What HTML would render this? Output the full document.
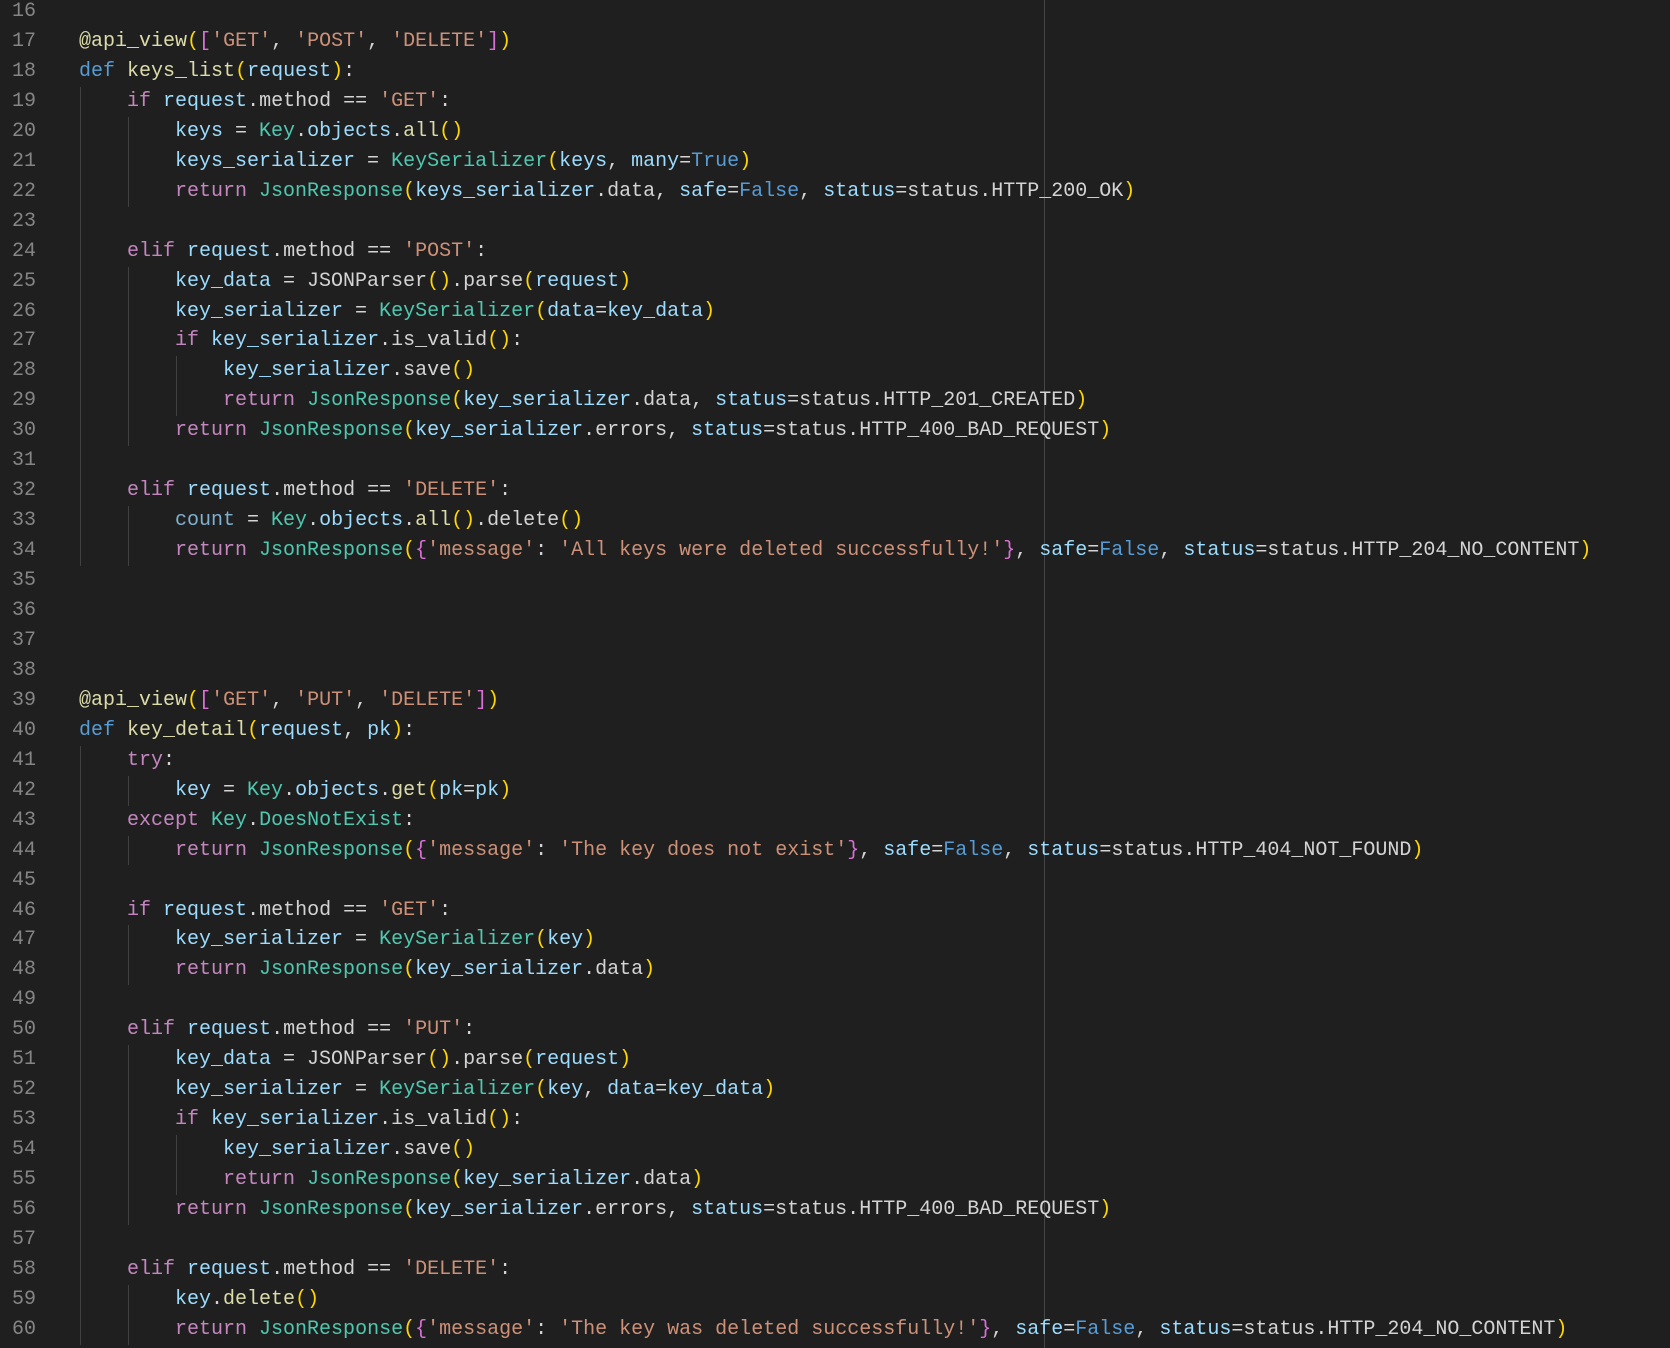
<!DOCTYPE html>
<html><head><meta charset="utf-8"><style>
html,body{margin:0;padding:0;background:#1f1f1f;width:1670px;height:1348px;overflow:hidden}
.wrap{position:relative;width:1670px;height:1348px;font-family:"Liberation Mono",monospace;font-size:20px}
.ln{position:absolute;left:0;width:36px;text-align:right;color:#858585;height:29.95px;line-height:29.95px}
.cd{position:absolute;left:79px;white-space:pre;color:#d4d4d4;height:29.95px;line-height:29.95px}
.g{position:absolute;width:1px;background:#404040}
.ruler{position:absolute;left:1044px;top:0;width:1px;height:1348px;background:#464646}
.k{color:#569cd6}.c{color:#c586c0}.f{color:#dcdcaa}.v{color:#9cdcfe}.t{color:#4ec9b0}.s{color:#ce9178}.y{color:#ffd700}.p{color:#da70d6}.w{color:#d4d4d4}.u{color:#7fb0cf}
</style></head><body><div class="wrap" id="w">
<div class="ruler"></div>
</div>
<script>
(function(){
var L={
16:'',
17:'<span class="f">@api_view</span><span class="y">(</span><span class="p">[</span><span class="s">\'GET\'</span>, <span class="s">\'POST\'</span>, <span class="s">\'DELETE\'</span><span class="p">]</span><span class="y">)</span>',
18:'<span class="k">def</span> <span class="f">keys_list</span><span class="y">(</span><span class="v">request</span><span class="y">)</span>:',
19:'    <span class="c">if</span> <span class="v">request</span>.method == <span class="s">\'GET\'</span>:',
20:'        <span class="v">keys</span> = <span class="t">Key</span>.<span class="v">objects</span>.<span class="f">all</span><span class="y">()</span>',
21:'        <span class="v">keys_serializer</span> = <span class="t">KeySerializer</span><span class="y">(</span><span class="v">keys</span>, <span class="v">many</span>=<span class="k">True</span><span class="y">)</span>',
22:'        <span class="c">return</span> <span class="t">JsonResponse</span><span class="y">(</span><span class="v">keys_serializer</span>.data, <span class="v">safe</span>=<span class="k">False</span>, <span class="v">status</span>=status.HTTP_200_OK<span class="y">)</span>',
23:'',
24:'    <span class="c">elif</span> <span class="v">request</span>.method == <span class="s">\'POST\'</span>:',
25:'        <span class="v">key_data</span> = JSONParser<span class="y">()</span>.parse<span class="y">(</span><span class="v">request</span><span class="y">)</span>',
26:'        <span class="v">key_serializer</span> = <span class="t">KeySerializer</span><span class="y">(</span><span class="v">data</span>=<span class="v">key_data</span><span class="y">)</span>',
27:'        <span class="c">if</span> <span class="v">key_serializer</span>.is_valid<span class="y">()</span>:',
28:'            <span class="v">key_serializer</span>.save<span class="y">()</span>',
29:'            <span class="c">return</span> <span class="t">JsonResponse</span><span class="y">(</span><span class="v">key_serializer</span>.data, <span class="v">status</span>=status.HTTP_201_CREATED<span class="y">)</span>',
30:'        <span class="c">return</span> <span class="t">JsonResponse</span><span class="y">(</span><span class="v">key_serializer</span>.errors, <span class="v">status</span>=status.HTTP_400_BAD_REQUEST<span class="y">)</span>',
31:'',
32:'    <span class="c">elif</span> <span class="v">request</span>.method == <span class="s">\'DELETE\'</span>:',
33:'        <span class="u">count</span> = <span class="t">Key</span>.<span class="v">objects</span>.<span class="f">all</span><span class="y">()</span>.delete<span class="y">()</span>',
34:'        <span class="c">return</span> <span class="t">JsonResponse</span><span class="y">(</span><span class="p">{</span><span class="s">\'message\'</span>: <span class="s">\'All keys were deleted successfully!\'</span><span class="p">}</span>, <span class="v">safe</span>=<span class="k">False</span>, <span class="v">status</span>=status.HTTP_204_NO_CONTENT<span class="y">)</span>',
35:'',36:'',37:'',38:'',
39:'<span class="f">@api_view</span><span class="y">(</span><span class="p">[</span><span class="s">\'GET\'</span>, <span class="s">\'PUT\'</span>, <span class="s">\'DELETE\'</span><span class="p">]</span><span class="y">)</span>',
40:'<span class="k">def</span> <span class="f">key_detail</span><span class="y">(</span><span class="v">request</span>, <span class="v">pk</span><span class="y">)</span>:',
41:'    <span class="c">try</span>:',
42:'        <span class="v">key</span> = <span class="t">Key</span>.<span class="v">objects</span>.<span class="f">get</span><span class="y">(</span><span class="v">pk</span>=<span class="v">pk</span><span class="y">)</span>',
43:'    <span class="c">except</span> <span class="t">Key</span>.<span class="t">DoesNotExist</span>:',
44:'        <span class="c">return</span> <span class="t">JsonResponse</span><span class="y">(</span><span class="p">{</span><span class="s">\'message\'</span>: <span class="s">\'The key does not exist\'</span><span class="p">}</span>, <span class="v">safe</span>=<span class="k">False</span>, <span class="v">status</span>=status.HTTP_404_NOT_FOUND<span class="y">)</span>',
45:'',
46:'    <span class="c">if</span> <span class="v">request</span>.method == <span class="s">\'GET\'</span>:',
47:'        <span class="v">key_serializer</span> = <span class="t">KeySerializer</span><span class="y">(</span><span class="v">key</span><span class="y">)</span>',
48:'        <span class="c">return</span> <span class="t">JsonResponse</span><span class="y">(</span><span class="v">key_serializer</span>.data<span class="y">)</span>',
49:'',
50:'    <span class="c">elif</span> <span class="v">request</span>.method == <span class="s">\'PUT\'</span>:',
51:'        <span class="v">key_data</span> = JSONParser<span class="y">()</span>.parse<span class="y">(</span><span class="v">request</span><span class="y">)</span>',
52:'        <span class="v">key_serializer</span> = <span class="t">KeySerializer</span><span class="y">(</span><span class="v">key</span>, <span class="v">data</span>=<span class="v">key_data</span><span class="y">)</span>',
53:'        <span class="c">if</span> <span class="v">key_serializer</span>.is_valid<span class="y">()</span>:',
54:'            <span class="v">key_serializer</span>.save<span class="y">()</span>',
55:'            <span class="c">return</span> <span class="t">JsonResponse</span><span class="y">(</span><span class="v">key_serializer</span>.data<span class="y">)</span>',
56:'        <span class="c">return</span> <span class="t">JsonResponse</span><span class="y">(</span><span class="v">key_serializer</span>.errors, <span class="v">status</span>=status.HTTP_400_BAD_REQUEST<span class="y">)</span>',
57:'',
58:'    <span class="c">elif</span> <span class="v">request</span>.method == <span class="s">\'DELETE\'</span>:',
59:'        <span class="v">key</span>.<span class="f">delete</span><span class="y">()</span>',
60:'        <span class="c">return</span> <span class="t">JsonResponse</span><span class="y">(</span><span class="p">{</span><span class="s">\'message\'</span>: <span class="s">\'The key was deleted successfully!\'</span><span class="p">}</span>, <span class="v">safe</span>=<span class="k">False</span>, <span class="v">status</span>=status.HTTP_204_NO_CONTENT<span class="y">)</span>'
};
var LH=29.95,T0=-3,w=document.getElementById('w'),h='';
function ty(n){return T0+(n-16)*LH;}
var G=[[0,19,34],[1,20,22],[1,25,30],[2,28,29],[1,33,34],[0,41,60],[1,42,42],[1,44,44],[1,47,48],[1,51,56],[2,54,55],[1,59,60]];
G.forEach(function(g){h+='<div class="g" style="left:'+(80+g[0]*48)+'px;top:'+ty(g[1]).toFixed(1)+'px;height:'+((g[2]-g[1]+1)*LH).toFixed(1)+'px"></div>';});
for(var n=16;n<=60;n++){h+='<div class="ln" style="top:'+ty(n).toFixed(1)+'px">'+n+'</div><div class="cd" style="top:'+ty(n).toFixed(1)+'px">'+L[n]+'</div>';}
w.insertAdjacentHTML('beforeend',h);
})();
</script>
</body></html>
